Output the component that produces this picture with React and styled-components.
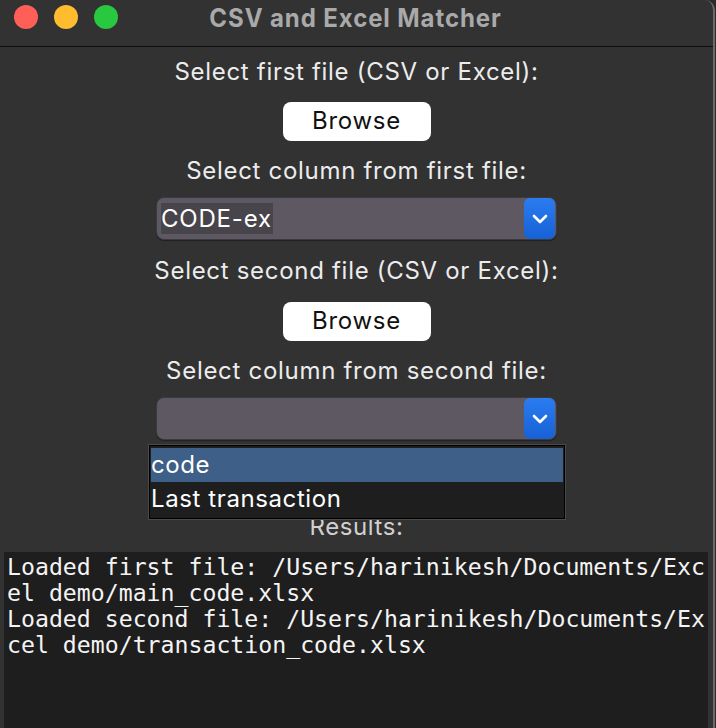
import styled, { createGlobalStyle } from 'styled-components'

const Global = createGlobalStyle`
  html, body {
    margin: 0;
    padding: 0;
    background: #2b2b2b;
  }
  body {
    font-family: Inter, "Liberation Sans", Arial, sans-serif;
  }
`

const Chevron = () => (
  <svg width="16" height="10" viewBox="0 0 16 10">
    <path d="M2 2 L8 8 L14 2" fill="none" stroke="#fff" strokeWidth="2.6" strokeLinecap="round" strokeLinejoin="round" />
  </svg>
)

const Dropdown = ({ value, open, options }) => (
  <SelectWrap>
    <SelectBox>
      <SelectValue>{value && <Picked>{value}</Picked>}</SelectValue>
      <ArrowBtn><Chevron /></ArrowBtn>
    </SelectBox>
    {open &&
      <Popup>
        {options.map((o, i) => (
          <Option key={o} active={i === 0}>{o}</Option>
        ))}
      </Popup>
    }
  </SelectWrap>
)

const App = () => (
  <>
    <Global />
    <Window>
      <TitleBar>
        <Lights>
          <Light color="#ff5f57" />
          <Light color="#febc2e" />
          <Light color="#28c840" />
        </Lights>
        <Title>CSV and Excel Matcher</Title>
      </TitleBar>
      <Content>
        <Label top={10}>Select first file (CSV or Excel):</Label>
        <Button top={15}>Browse</Button>
        <Label top={15}>Select column from first file:</Label>
        <Gap top={11} />
        <Dropdown value="CODE-ex" />
        <Label top={16}>Select second file (CSV or Excel):</Label>
        <Button top={16}>Browse</Button>
        <Label top={15}>Select column from second file:</Label>
        <Gap top={11} />
        <Dropdown open options={['code', 'Last transaction']} />
        <ResultsLabel>Results:</ResultsLabel>
        <Output>
          {'Loaded first file: /Users/harinikesh/Documents/Exc\nel demo/main_code.xlsx\nLoaded second file: /Users/harinikesh/Documents/Ex\ncel demo/transaction_code.xlsx'}
        </Output>
      </Content>
    </Window>
  </>
)

export default App

const Window = styled.div`
  width: 713px;
  height: 728px;
  background: #323232;
  border-right: 2px solid #6a6a6a;
  border-top-right-radius: 10px;
  overflow: hidden;
  display: flex;
  flex-direction: column;
`

const TitleBar = styled.div`
  height: 46px;
  flex: none;
  position: relative;
  display: flex;
  align-items: center;
  justify-content: center;
  border-bottom: 1px solid #0c0c0c;
  box-sizing: content-box;
`

const Lights = styled.div`
  position: absolute;
  left: 14px;
  top: 5px;
  display: flex;
  gap: 16px;
`

const Light = styled.span`
  width: 24px;
  height: 24px;
  border-radius: 50%;
  background: ${p => p.color};
`

const Title = styled.div`
  font-weight: bold;
  font-size: 24px;
  letter-spacing: 0.9px;
  color: #a9a9a9;
  margin-top: -12px;
  margin-left: -2px;
  transform: scaleY(1.06);
`

const Content = styled.div`
  flex: 1;
  display: flex;
  flex-direction: column;
  align-items: center;
  min-height: 0;
`

const Label = styled.div`
  margin-top: ${p => p.top}px;
  height: 30px;
  line-height: 30px;
  font-size: 24px;
  letter-spacing: 0.7px;
  color: #ececec;
`

const Gap = styled.div`
  height: ${p => p.top}px;
  flex: none;
`

const Button = styled.div`
  margin-top: ${p => p.top}px;
  width: 148px;
  height: 39px;
  box-sizing: border-box;
  background: #ffffff;
  border-radius: 8px;
  display: flex;
  align-items: center;
  justify-content: center;
  font-size: 24px;
  letter-spacing: 0.7px;
  color: #111;
  padding-bottom: 2px;
`

const SelectWrap = styled.div`
  position: relative;
  width: 401px;
  height: 43px;
  flex: none;
`

const SelectBox = styled.div`
  height: 100%;
  box-sizing: border-box;
  background: #5d5861;
  border: 1px solid #3c3a3e;
  border-radius: 8px;
  display: flex;
  align-items: center;
  padding: 0 1px 0 4px;
  box-shadow: 0 1px 1px rgba(0, 0, 0, 0.35);
`

const SelectValue = styled.div`
  flex: 1;
  display: flex;
`

const Picked = styled.span`
  background: #48444b;
  color: #fff;
  font-size: 24px;
  letter-spacing: 0.8px;
  line-height: 31px;
  padding: 0 1px 0 0;
`

const ArrowBtn = styled.div`
  width: 31px;
  height: 41px;
  border-radius: 6px;
  background: linear-gradient(#2a7cf0, #1761d6);
  display: flex;
  align-items: center;
  justify-content: center;
`

const Popup = styled.div`
  position: absolute;
  left: -7px;
  top: 48px;
  width: 416px;
  box-sizing: border-box;
  background: #1e1e1e;
  border: 1px solid #000;
  outline: 1px solid #4a4a4a;
  padding: 2px 1px;
  z-index: 2;
`

const Option = styled.div`
  height: 34px;
  line-height: 34px;
  font-size: 24px;
  letter-spacing: 0.6px;
  color: #fff;
  padding-left: 0;
  background: ${p => (p.active ? '#3e5f87' : 'transparent')};
`

const ResultsLabel = styled.div`
  margin-top: 72px;
  height: 30px;
  line-height: 30px;
  font-size: 24px;
  letter-spacing: 0.6px;
  color: #d0d0d0;
`

const Output = styled.div`
  margin-top: 10px;
  align-self: stretch;
  margin-left: 4px;
  margin-right: 5px;
  flex: 1;
  background: #1e1e1e;
  color: #f4f4f4;
  font-family: "DejaVu Sans Mono", monospace;
  font-size: 23.2px;
  line-height: 26px;
  white-space: pre;
  padding: 2px 0 0 3px;
  overflow: hidden;
`
